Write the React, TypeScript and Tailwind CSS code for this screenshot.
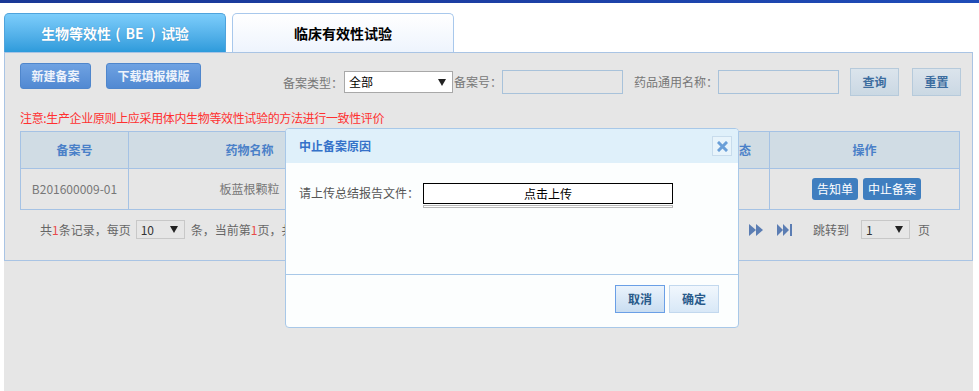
import React from "react";

const font = { fontFamily: "'Noto Sans CJK SC', 'Noto Sans', sans-serif" };

function Caret() {
  return (
    <svg width="8" height="7" viewBox="0 0 8 7" className="shrink-0">
      <polygon points="0,0 8,0 4,7" fill="#222" />
    </svg>
  );
}

function FastFwd({ last }: { last?: boolean }) {
  return last ? (
    <svg width="15" height="12" viewBox="0 0 15 12">
      <polygon points="0,0 6,6 0,12" fill="#5b7db3" />
      <polygon points="6,0 12,6 6,12" fill="#5b7db3" />
      <rect x="13" y="0" width="2" height="12" fill="#5b7db3" />
    </svg>
  ) : (
    <svg width="14" height="12" viewBox="0 0 14 12">
      <polygon points="0,0 7,6 0,12" fill="#5b7db3" />
      <polygon points="7,0 14,6 7,12" fill="#5b7db3" />
    </svg>
  );
}

export default function App() {
  return (
    <div className="relative w-[979px] h-[391px] overflow-hidden bg-white" style={font}>
      <div className="h-[3px] bg-gradient-to-r from-[#1a3896] via-[#1c3fa4] to-[#1f4cb8]" />
      {/* tabs */}
      <div className="flex gap-[6px] pl-[4px] pt-[10px] h-[49px]">
        <div className="w-[222px] h-[39px] rounded-t-[5px] border border-b-0 border-[#4ea3dc] bg-gradient-to-b from-[#7ccdfb] to-[#2d9bdb] flex items-center justify-center text-white font-bold text-[14px] [text-shadow:0_0_1px_rgba(0,60,120,0.4)]">
          生物等效性<span className="ml-[4px] mr-[5px]">(</span>BE<span className="ml-[7px] mr-[5px]">)</span>试验
        </div>
        <div className="w-[222px] h-[39px] rounded-t-[5px] border border-b-0 border-[#a8c8ec] bg-gradient-to-b from-white to-[#eef4fd] flex items-center justify-center text-black font-bold text-[14px]">
          临床有效性试验
        </div>
      </div>
      {/* gray area */}
      <div className="ml-[4px] w-[969px] h-[339px] bg-[#e6e6e6]">
        <div className="h-[209px] border border-[#a9c4e4] pl-[15px] pt-[10px]">
          {/* toolbar */}
          <div className="flex items-start h-[33px]">
            <button className="w-[71px] h-[26px] rounded-[3px] border border-[#4f86cc] bg-gradient-to-b from-[#6fa2e2] to-[#5189d2] text-[12px] font-bold text-[#eef3fb]">
              新建备案
            </button>
            <button className="ml-[15px] w-[95px] h-[26px] rounded-[3px] border border-[#4f86cc] bg-gradient-to-b from-[#6fa2e2] to-[#5189d2] text-[12px] font-bold text-[#eef3fb]">
              下载填报模版
            </button>
            <div className="ml-[82px] mt-[5px] flex items-center text-[12px] text-[#777]">
              <span className="w-[61px] h-[22px] leading-[24px]">备案类型：</span>
              <div className="w-[109px] h-[22px] bg-white border border-[#a8a8a8] flex items-center pl-[4px] pr-[6px] text-black">
                <span className="flex-1">全部</span>
                <Caret />
              </div>
              <span className="w-[49px] pl-[1px] leading-[24px]">备案号：</span>
              <div className="w-[121px] h-[24px] border border-[#a8c2da] bg-[#e6e6e6]" />
              <span className="ml-[11px] w-[84px] leading-[24px]">药品通用名称：</span>
              <div className="w-[121px] h-[24px] border border-[#a8c2da] bg-[#e6e6e6]" />
              <button className="ml-[11px] w-[49px] h-[28px] self-start border border-[#b6cadb] bg-gradient-to-b from-[#dbe4ec] via-[#d3dee8] to-[#cad8e3] text-[12px] font-bold text-[#3c6d9f]">
                查询
              </button>
              <button className="ml-[13px] w-[49px] h-[28px] self-start border border-[#b6cadb] bg-gradient-to-b from-[#dbe4ec] via-[#d3dee8] to-[#cad8e3] text-[12px] font-bold text-[#3c6d9f]">
                重置
              </button>
            </div>
          </div>
          {/* notice */}
          <div className="mt-[14px] text-[12px] leading-[16px] text-[#ff3030] tracking-[-0.35px]">
            注意:生产企业原则上应采用体内生物等效性试验的方法进行一致性评价
          </div>
          {/* table */}
          <table className="mt-[5px] w-[939px] table-fixed border-collapse text-[12px]">
            <colgroup>
              <col className="w-[108px]" />
              <col className="w-[242px]" />
              <col className="w-[170px]" />
              <col className="w-[168px]" />
              <col className="w-[61px]" />
              <col className="w-[190px]" />
            </colgroup>
            <thead>
              <tr className="h-[37px] bg-[#d0dce4]">
                {["备案号", "药物名称", "注册申请人", "备案日期", "状态", "操作"].map((h) => (
                  <th key={h} className="border border-[#a5c2e4] font-bold text-[#4a80c8] text-center">
                    {h}
                  </th>
                ))}
              </tr>
            </thead>
            <tbody>
              <tr className="h-[41px] text-[#777]">
                <td className="border border-[#a5c2e4] text-center">B201600009-01</td>
                <td className="border border-[#a5c2e4] text-center">板蓝根颗粒</td>
                <td className="border border-[#a5c2e4] text-center">某某制药有限公司</td>
                <td className="border border-[#a5c2e4] text-center">2016-01-01</td>
                <td className="border border-[#a5c2e4] text-center pr-[30px] text-[#22a022]">已提交</td>
                <td className="border border-[#a5c2e4] text-center">
                  <div className="flex justify-center gap-[5px] pl-[4px]">
                    <button className="h-[22px] px-[5px] rounded-[3px] bg-[#3f7ebf] text-white text-[12px]">告知单</button>
                    <button className="h-[22px] px-[5px] rounded-[3px] bg-[#3f7ebf] text-white text-[12px]">中止备案</button>
                  </div>
                </td>
              </tr>
            </tbody>
          </table>
          {/* pagination */}
          <div className="mt-[10px] w-[939px] h-[19px] flex items-center text-[12px] text-[#666]">
            <span className="ml-[20px]">
              共<span className="text-[#e84a4a]">1</span>条记录，每页
            </span>
            <div className="ml-[5px] w-[49px] h-[19px] border border-[#c8c8c8] flex items-center pl-[4px] pr-[6px] text-[#333]">
              <span className="flex-1">10</span>
              <Caret />
            </div>
            <span className="ml-[6px]">
              条，当前第<span className="text-[#e84a4a]">1</span>页，共<span className="text-[#e84a4a]">1</span>页
            </span>
            <div className="ml-auto mr-[29px] flex items-center">
              <FastFwd />
              <span className="ml-[14px]"><FastFwd last /></span>
              <span className="ml-[21px]">跳转到</span>
              <div className="ml-[12px] w-[49px] h-[19px] border border-[#c8c8c8] flex items-center pl-[4px] pr-[6px] text-[#333]">
                <span className="flex-1">1</span>
                <Caret />
              </div>
              <span className="ml-[8px]">页</span>
            </div>
          </div>
        </div>
      </div>

      {/* modal */}
      <div className="absolute left-[285px] top-[128px] w-[454px] h-[200px] rounded-[4px] border border-[#a8c8e8] bg-[#fcfefe] flex flex-col">
        <div className="h-[34px] bg-[#dff0fa] flex items-center pl-[13px] pr-[6px] rounded-t-[3px]">
          <span className="flex-1 text-[12px] font-bold text-[#3572c9]">中止备案原因</span>
          <div className="w-[20px] h-[20px] border border-[#c8dcec] bg-[#e8f4fb] flex items-center justify-center">
            <svg width="11" height="11" viewBox="0 0 11 11">
              <path d="M2 2 L9 9 M9 2 L2 9" stroke="#6a9fd8" strokeWidth="3" strokeLinecap="square" />
            </svg>
          </div>
        </div>
        <div className="h-[111px] pl-[13px] pt-[20px] flex items-start">
          <span className="text-[12px] leading-[20px] text-[#555] w-[124px]">请上传总结报告文件：</span>
          <div className="flex flex-col">
            <div className="w-[250px] h-[21px] border border-black bg-white flex items-center justify-center text-[12px] text-black">
              点击上传
            </div>
            <div className="mt-[1px] w-[250px] h-[3px] border border-[#b8b8b8] bg-white" />
          </div>
        </div>
        <div className="h-px bg-[#a8c8e8]" />
        <div className="flex justify-end gap-[4px] pr-[19px] pt-[10px]">
          <button className="w-[50px] h-[28px] border border-[#6a9fe6] bg-gradient-to-b from-[#eaf3fc] to-[#c9ddf1] text-[12px] font-bold text-[#285a8a]">
            取消
          </button>
          <button className="w-[50px] h-[28px] border border-[#c2d8ee] bg-gradient-to-b from-[#f1f7fd] to-[#d8e8f7] text-[12px] font-bold text-[#285a8a]">
            确定
          </button>
        </div>
      </div>
    </div>
  );
}
